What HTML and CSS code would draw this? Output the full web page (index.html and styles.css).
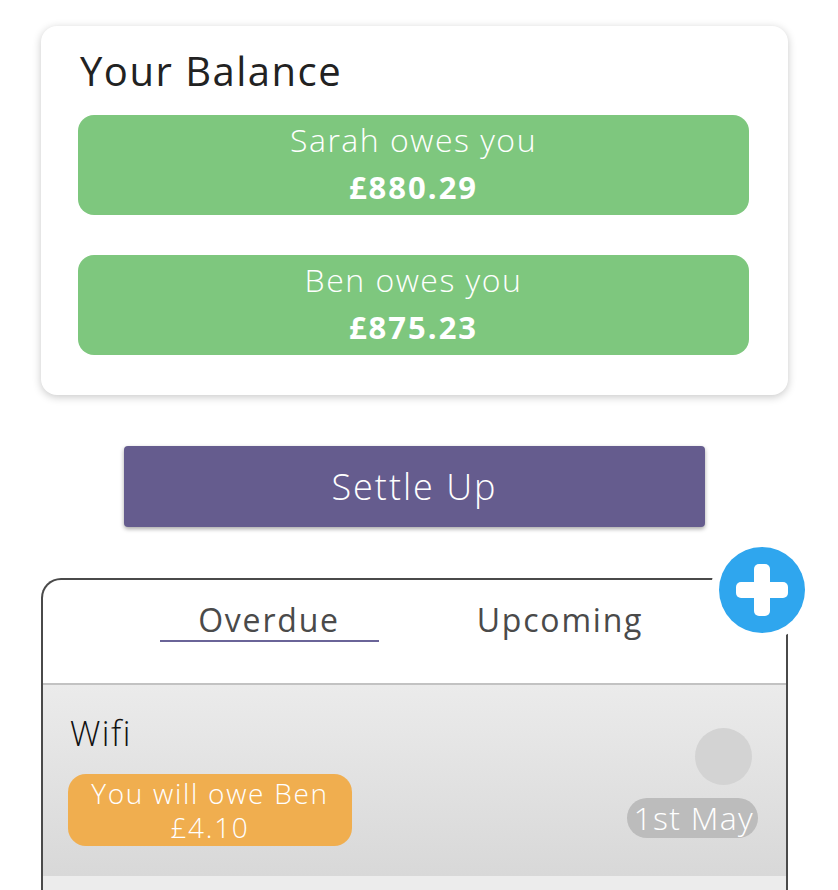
FILE: index.html
```html
<!DOCTYPE html>
<html lang="en">
<head>
<meta charset="utf-8">
<title>Balance</title>
<link rel="stylesheet" href="styles.css">
</head>
<body>
<div class="page">
  <section class="balance-card">
    <h1 class="balance-title">Your Balance</h1>
    <div class="owe-box">
      <div class="owe-label">Sarah owes you</div>
      <div class="owe-amount">£880.29</div>
    </div>
    <div class="owe-box">
      <div class="owe-label">Ben owes you</div>
      <div class="owe-amount">£875.23</div>
    </div>
  </section>

  <div class="settle-row">
    <button class="settle-btn">Settle Up</button>
  </div>

  <section class="bills-card">
    <button class="add-btn" aria-label="Add">
      <svg width="86" height="86" viewBox="0 0 86 86">
        <circle cx="43" cy="43" r="43" fill="#2fa6ee"/>
        <rect x="35" y="17" width="16" height="52" rx="5" fill="#fff"/>
        <rect x="17" y="35" width="52" height="16" rx="5" fill="#fff"/>
      </svg>
    </button>
    <div class="tabs">
      <div class="tab tab-active">Overdue</div>
      <div class="tab">Upcoming</div>
    </div>
    <div class="divider"></div>
    <div class="bill">
      <div class="bill-left">
        <div class="bill-name">Wifi</div>
        <div class="bill-pill">
          <div class="pill-line">You will owe Ben</div>
          <div class="pill-line">£4.10</div>
        </div>
      </div>
      <div class="bill-right">
        <div class="avatar"></div>
        <div class="date-pill">1st May</div>
      </div>
    </div>
    <div class="bill bill-next"></div>
  </section>
</div>
</body>
</html>
```

FILE: styles.css
```css
* { box-sizing: border-box; }
html, body { margin: 0; padding: 0; background: #fff; }
body {
  font-family: "Open Sans", "Noto Sans", sans-serif;
  overflow: hidden;
  height: 890px;
  letter-spacing: 1.5px;
}
.page {
  width: 747px;
  margin-left: 41px;
  padding-top: 26px;
}
.balance-card {
  background: #fff;
  border-radius: 16px;
  box-shadow: 0 2px 8px rgba(0,0,0,0.22);
  padding: 21px 39px 40px 37px;
}
.balance-title {
  margin: 0 0 20px 2px;
  font-size: 40px;
  line-height: 48px;
  font-weight: 400;
  color: #222;
}
.owe-box {
  height: 100px;
  background: #7ec77e;
  border-radius: 16px;
  color: #fff;
  text-align: center;
  padding-top: 6px;
}
.owe-box + .owe-box { margin-top: 40px; }
.owe-label {
  font-size: 32px;
  line-height: 38px;
  font-weight: 300;
}
.owe-amount {
  margin-top: 9px;
  font-size: 31px;
  line-height: 38px;
  font-weight: 700;
  letter-spacing: 2px;
}
.settle-row {
  display: flex;
  justify-content: center;
  margin-top: 51px;
}
.settle-btn {
  width: 581px;
  height: 81px;
  border: 0;
  border-radius: 4px;
  background: #655c8e;
  color: #fff;
  font-family: inherit;
  font-size: 36px;
  font-weight: 300;
  letter-spacing: 2px;
  box-shadow: 0 2px 4px rgba(0,0,0,0.35);
}
.bills-card {
  position: relative;
  margin-top: 51px;
  border: 2px solid #4a4a4a;
  border-bottom: 0;
  border-top-left-radius: 20px;
  height: 320px;
}
.add-btn {
  position: absolute;
  top: -33px;
  right: -19px;
  width: 86px;
  height: 86px;
  padding: 0;
  border: 0;
  border-radius: 50%;
  background: #fff;
  box-shadow: 0 0 0 8px #fff;
}
.add-btn svg { display: block; }
.tabs {
  display: flex;
  justify-content: center;
  gap: 72px;
  padding-top: 20px;
}
.tab {
  width: 219px;
  text-align: center;
  font-size: 32px;
  line-height: 40px;
  color: #4a4a4a;
  letter-spacing: 1.8px;
  border-bottom: 2px solid transparent;
}
.tab-active { border-bottom-color: #6a6498; }
.divider {
  margin-top: 41px;
  height: 2px;
  background: #c2c2c2;
}
.bill {
  display: flex;
  justify-content: space-between;
  padding: 28px 28px 30px 27px;
  background: linear-gradient(#ebebeb, #d8d8d8);
  height: 191px;
}
.bill-next {
  background: #ececec;
  height: 30px;
  padding: 0;
}
.bill-name {
  font-size: 34px;
  line-height: 40px;
  color: #111;
  font-weight: 300;
}
.bill-pill {
  margin-top: 21px;
  margin-left: -2px;
  width: 284px;
  height: 72px;
  border-radius: 18px;
  background: #f0ae4f;
  color: #fff;
  text-align: center;
  display: flex;
  flex-direction: column;
  justify-content: center;
  gap: 0;
}
.pill-line {
  font-size: 28px;
  line-height: 34px;
  font-weight: 300;
  letter-spacing: 1.7px;
}
.bill-right {
  display: flex;
  flex-direction: column;
  align-items: flex-end;
  padding-top: 15px;
}
.avatar {
  width: 57px;
  height: 57px;
  border-radius: 50%;
  background: #d3d3d3;
  margin-right: 6px;
}
.date-pill {
  margin-top: 13px;
  height: 40px;
  padding: 0 4px 0 6px;
  border-radius: 20px;
  background: #bcbcbc;
  color: #fff;
  font-size: 32px;
  line-height: 40px;
  font-weight: 300;
  letter-spacing: 1.3px;
}
```
